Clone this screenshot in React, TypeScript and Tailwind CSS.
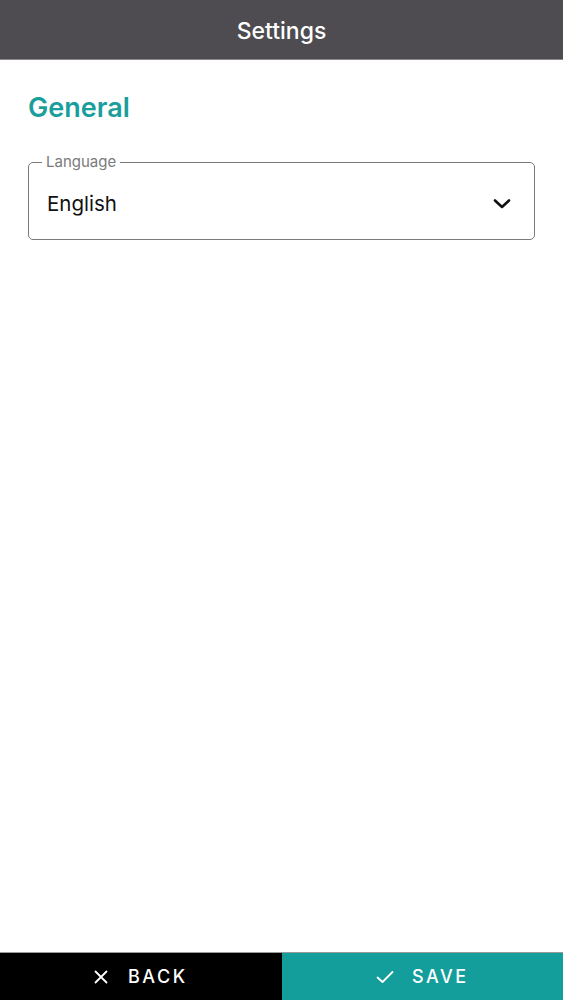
import React from "react";

export default function App() {
  return (
    <div className="flex h-[1000px] w-full flex-col bg-white" style={{ fontFamily: "Inter, 'Noto Sans', sans-serif" }}>
      <header className="flex h-[60px] shrink-0 items-center justify-center border-b border-[#8a888c] bg-[#4e4c50] pt-[3px]">
        <h1 className="text-[23px] font-medium text-white">Settings</h1>
      </header>
      <main className="flex-1 px-[28px] pt-[32px]">
        <h2 className="text-[27px] font-semibold leading-[32px] text-[#1a9e9b]">General</h2>
        <fieldset className="mt-[30px] h-[86px] rounded-[5px] border border-[#7b7b7b] px-[13px]">
          <legend className="px-[4px] text-[15px] leading-[16px] text-[#7a7a7a]">Language</legend>
          <div className="flex items-center justify-between pl-[5px] pr-[10px] pt-[19px]">
            <span className="text-[20.5px] text-[#111]">English</span>
            <svg width="18" height="12" viewBox="0 0 18 12" fill="none">
              <path d="M2 2.5 L9 9 L16 2.5" stroke="#111" strokeWidth="2.6" strokeLinecap="round" strokeLinejoin="round" />
            </svg>
          </div>
        </fieldset>
      </main>
      <footer className="grid h-[48px] shrink-0 grid-cols-2 border-t border-[#9a9a9a]">
        <button className="flex items-center justify-center gap-[20px] bg-black text-white">
          <svg width="14" height="14" viewBox="0 0 14 14" fill="none">
            <path d="M1.5 1.5 L12.5 12.5 M12.5 1.5 L1.5 12.5" stroke="white" strokeWidth="1.8" strokeLinecap="round" />
          </svg>
          <span className="text-[18px] font-medium tracking-[2.5px]">BACK</span>
        </button>
        <button className="flex items-center justify-center gap-[18px] bg-[#139e9c] text-white">
          <svg width="18" height="14" viewBox="0 0 18 14" fill="none">
            <path d="M1.5 7.5 L6.5 12 L16.5 2" stroke="white" strokeWidth="1.8" strokeLinecap="round" strokeLinejoin="round" />
          </svg>
          <span className="text-[18px] font-medium tracking-[2.5px]">SAVE</span>
        </button>
      </footer>
    </div>
  );
}
